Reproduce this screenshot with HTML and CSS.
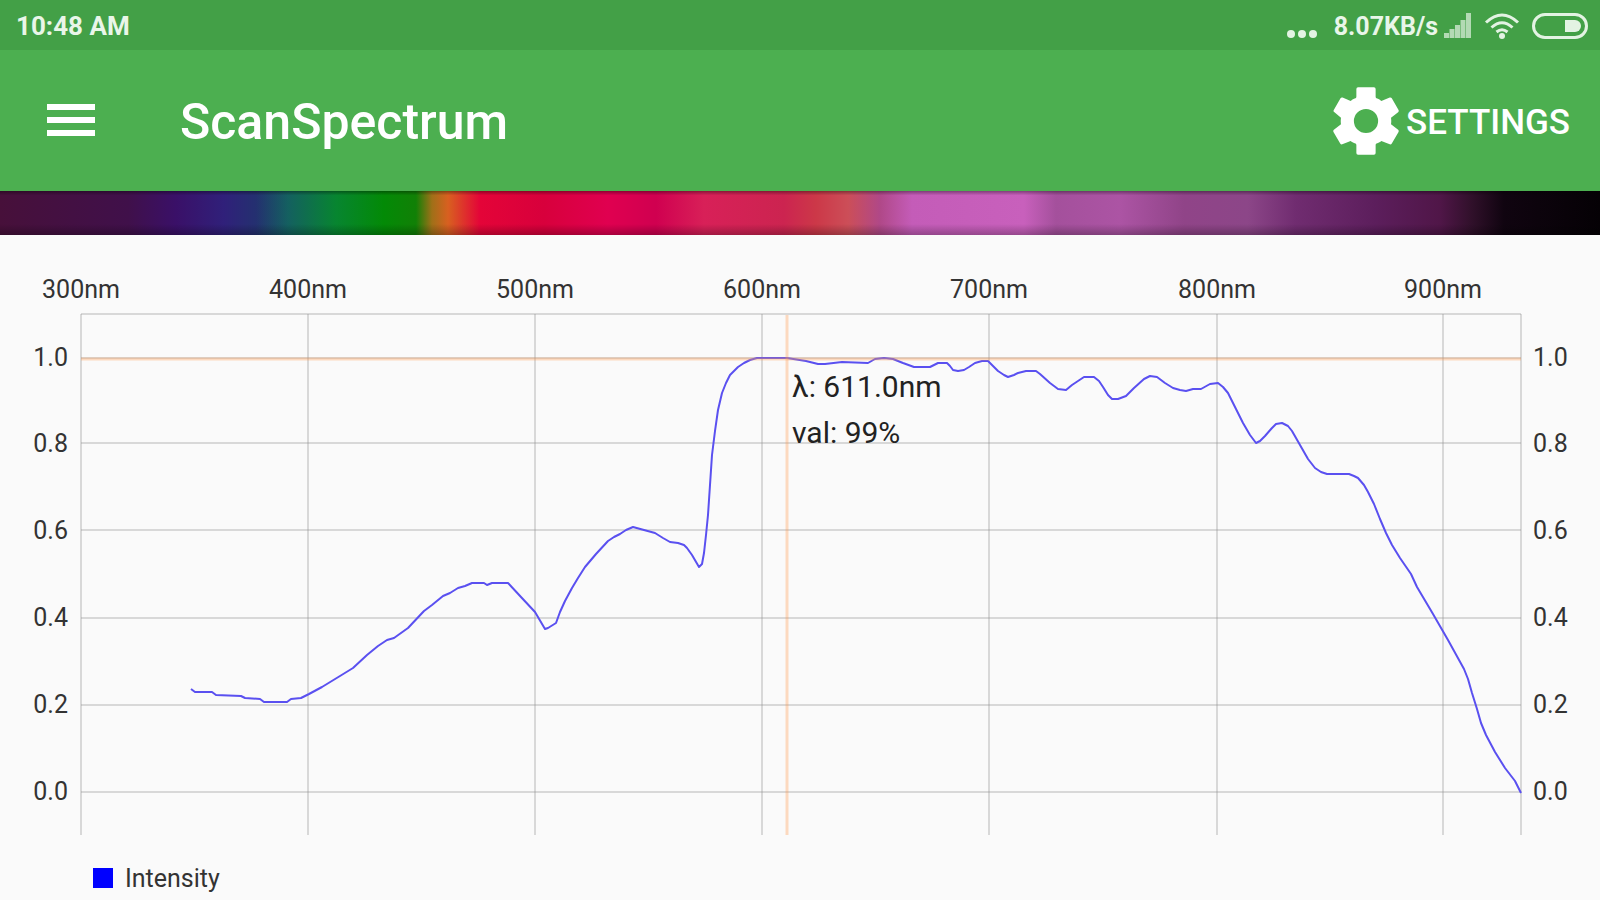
FILE: index.html
```html
<!DOCTYPE html>
<html lang="en">

<head>
    <meta charset="UTF-8">
    <meta name="viewport" content="width=device-width, initial-scale=1.0">
    <title>ScanSpectrum</title>
    <link rel="stylesheet" href="styles.css">
</head>

<body>
    <div class="status-bar">
        <span>10:48 AM</span>
        <div class="status-icons">
            <svg class="dots" width="32" height="26" viewBox="0 0 32 26">
                <circle cx="5" cy="21" r="4" />
                <circle cx="16" cy="21" r="4" />
                <circle cx="27" cy="21" r="4" />
            </svg>
            <span class="net-speed">8.07KB/s</span>
            <svg class="signal" width="28" height="26" viewBox="0 0 28 26">
                <path d="M0 25v-5h5v5zM5.5 25V16h5v9zM11 25V12h5v13zM16.500 25V7h5v18zM22 25V0h5v25z" />
            </svg>
            <svg class="wifi" width="36" height="26" viewBox="0 0 36 26">
                <path d="M2 9.500Q18 -5.500 34 9.500M7.500 14.500Q18 5 28.500 14.500M12.500 19Q18 14.500 23.500 19" />
                <circle cx="18" cy="23" r="3" />
            </svg>
            <svg class="battery" width="56" height="26" viewBox="0 0 56 26">
                <rect class="battery-shell" x="1.500" y="1.500" width="53" height="23" rx="11.500" />
                <path d="M33 7h10a6 6 0 0 1 0 12h-10z" />
            </svg>
        </div>
    </div>

    <header class="app-bar">
        <button class="menu-btn" aria-label="Menu">
            <svg width="48" height="34" viewBox="0 0 48 34">
                <path d="M0 0h48v6H0zM0 13h48v6H0zM0 26h48v6H0z" />
            </svg>
        </button>
        <h1 class="bar-text">ScanSpectrum</h1>
        <button class="settings-btn">
            <svg width="66" height="68" viewBox="2.2 2 19.6 20">
                <path d="M19.43 12.98c.04-.32.07-.64.07-.98s-.03-.66-.07-.98l2.11-1.65c.19-.15.24-.42.12-.64l-2-3.46c-.12-.22-.39-.3-.61-.22l-2.49 1c-.4-.3-.7-.5-1.2-.7-.4-.1-.5-.3-.5-.6V2.500q0-.5-.5-.5H9.640q-.5 0-.5.500v2.230c0 .3-.1.500-.5.600-.5.200-.8.400-1.200.700l-2.400-1c-.23-.09-.49 0-.61.22l-2 3.46c-.13.22-.07.49.12.64l2.020 1.650c-.04.32-.07.65-.07.98s.03.66.07.98l-2.110 1.650c-.19.15-.24.42-.12.64l2 3.460c.12.22.39.3.61.22l2.490-1c.4.3.7.5 1.200.700.400.100.500.300.500.600v2.270q0 .5.500.500h4.720q.5 0 .5-.500v-2.270c0-.3.1-.5.5-.6.5-.2.8-.4 1.200-.7l2.490 1c.23.09.49 0 .61-.22l2-3.460c.12-.22.07-.49-.12-.64zM12 15.600a3.600 3.600 0 1 1 0-7.200a3.600 3.600 0 1 1 0 7.200z" />
            </svg>
            <span class="bar-text">SETTINGS</span>
        </button>
    </header>

    <div class="spectrum-strip"></div>

    <main>
        <svg class="chart" viewBox="0 0 1600 615" role="img" aria-label="Intensity by wavelength">
            <!-- grid -->
            <path class="grid" d="M81 79H1521M81 123H1521M81 208H1521M81 295H1521M81 383H1521M81 470H1521M81 557H1521" />
            <path class="grid" d="M81 79V600M308 79V600M535 79V600M762 79V600M989 79V600M1217 79V600M1443 79V600M1521 79V600" />

            <!-- intensity curve -->
            <polyline class="curve" points="191,454 195,457 212,457 216,460 241,461 245,463 260,464 264,467 287,467 291,464 301,463 309,459 322,452 340,441 353,433 367,420 378,411 387,405 394,403 408,393 424,376 432,370 443,361 450,358 458,353 465,351 472,348 484,348 487,350 492,348 508,348 521,362 535,377 545,394 548,393 556,388 560,377 565,366 572,353 578,343 585,332 596,319 608,306 614,302 620,299 626,295 633,292 644,295 655,298 663,303 670,307 678,308 684,310 687,313 692,320 699,332 702,329 704,318 706,300 708,280 712,220 715,196 718,175 722,158 726,148 730,140 738,132 744,128 750,125 757,123 787,123 806,126 818,129 825,129 842,127 868,128 875,124 884,123 893,124 903,128 914,132 930,132 938,128 947,128 950,131 953,135 958,136 964,135 969,132 975,128 982,126 988,126 992,130 998,136 1004,140 1008,142 1014,140 1018,138 1026,136 1036,136 1040,139 1050,148 1058,154 1066,155 1072,150 1078,146 1084,142 1094,142 1099,146 1103,152 1108,160 1112,164 1118,164 1126,161 1134,153 1144,144 1150,141 1157,142 1165,148 1173,153 1180,155 1186,156 1193,154 1201,154 1210,149 1218,148 1223,152 1228,158 1236,174 1243,188 1250,200 1256,208 1260,206 1265,201 1272,193 1276,189 1282,188 1288,191 1292,196 1300,210 1308,224 1315,233 1321,237 1327,239 1349,239 1354,241 1358,243 1364,250 1368,257 1374,269 1380,284 1386,298 1392,310 1400,323 1411,339 1417,352 1433,379 1448,405 1464,434 1468,444 1472,458 1477,474 1481,488 1486,500 1495,517 1505,533 1515,546 1521,558" />

            <!-- cursor -->
            <path class="cursor-h" d="M81 124H1521" />
            <path class="cursor-v" d="M787 80V600" />
            <text class="cursor-text" x="792" y="162">λ: 611.0nm</text>
            <text class="cursor-text" x="792" y="208">val: 99%</text>

            <g class="x-labels">
                <text x="81" y="63">300nm</text>
                <text x="308" y="63">400nm</text>
                <text x="535" y="63">500nm</text>
                <text x="762" y="63">600nm</text>
                <text x="989" y="63">700nm</text>
                <text x="1217" y="63">800nm</text>
                <text x="1443" y="63">900nm</text>
            </g>
            <g class="y-labels-left">
                <text x="68" y="131">1.0</text>
                <text x="68" y="217">0.8</text>
                <text x="68" y="304">0.6</text>
                <text x="68" y="391">0.4</text>
                <text x="68" y="478">0.2</text>
                <text x="68" y="565">0.0</text>
            </g>
            <g class="y-labels-right">
                <text x="1533" y="131">1.0</text>
                <text x="1533" y="217">0.8</text>
                <text x="1533" y="304">0.6</text>
                <text x="1533" y="391">0.4</text>
                <text x="1533" y="478">0.2</text>
                <text x="1533" y="565">0.0</text>
            </g>
        </svg>
        <div class="legend">
            <span class="legend-color"></span>
            <span>Intensity</span>
        </div>
    </main>
</body>

</html>
```
FILE: styles.css
```css
* {
    box-sizing: border-box;
}

body {
    margin: 0;
    background-color: #fafafa;
    color: #222;
    font-family: Roboto, "Liberation Sans", sans-serif;
}

svg {
    display: block;
    flex-shrink: 0;
}

button {
    display: flex;
    align-items: center;
    padding: 0;
    border: none;
    background: none;
    color: white;
    font-family: inherit;
    cursor: pointer;
}

/* status bar */
.status-bar {
    display: flex;
    justify-content: space-between;
    align-items: center;
    height: 50px;
    padding: 2px 12px 0 16px;
    background-color: #43a047;
    color: #e9f6e9;
    font-size: 26px;
    font-weight: 700;
}
.status-icons {
    display: flex;
    align-items: center;
}
.status-icons svg {
    fill: #e3f3e3;
}
.net-speed {
    margin: 0 6px 0 16px;
    font-size: 25px;
}
.signal {
    opacity: 0.7;
}
.wifi {
    margin: 0 12px;
}
.wifi path, .status-icons .battery-shell {
    fill: none;
    stroke: #e3f3e3;
    stroke-width: 3;
}

/* app bar */
.app-bar {
    display: flex;
    align-items: center;
    height: 141px;
    padding: 0 30px 0 47px;
    background-color: #4caf50;
    color: white;
}
.app-bar svg {
    fill: white;
}
.app-bar h1 {
    margin: 0 auto 0 85px;
    font-size: 50px;
    font-weight: 500;
}
.app-bar .bar-text {
    padding-top: 3px;
}
.settings-btn {
    gap: 7px;
    font-size: 35px;
    font-weight: 500;
}

.spectrum-strip {
    height: 44px;
    background:
        linear-gradient(to bottom, rgba(0, 0, 0, 0.35), transparent 10%, transparent 75%, rgba(0, 0, 0, 0.25)),
        linear-gradient(to right,
            #47103a 0%, #40104a 8%, #3a1068 11%, #30207a 14%,
            #243070 16%, #146060 18%, #078530 21%, #038a06 24%,
            #118006 26%, #a07018 27%, #d86020 28%, #e40438 30%,
            #d8003c 34%, #e00050 38%, #d00050 41%, #d82058 44%,
            #cc2450 49%, #cc3848 51%, #cc4e58 53%, #b04888 55%,
            #c45cb8 57%, #c860bc 64%, #a4509c 66%, #ac54a4 70%,
            #904488 74%, #8c4688 78%, #702c70 81%, #5c1e5c 86%,
            #501648 90%, #30102a 92%, #100410 94%, #050105 100%);
}

/* chart */
.chart {
    width: 100%;
    height: auto;
}
.chart text {
    fill: #333;
    font-size: 25px;
}
.chart .cursor-text {
    fill: #222;
    font-size: 30px;
}
.grid {
    stroke: #999;
    stroke-opacity: 0.35;
    stroke-width: 2;
}
.curve {
    fill: none;
    stroke: #5a50f0;
    stroke-width: 2;
    stroke-linejoin: round;
}
.cursor-h, .cursor-v {
    stroke: #ff9c50;
    stroke-opacity: 0.35;
    stroke-width: 3;
}
.x-labels {
    text-anchor: middle;
}
.y-labels-left {
    text-anchor: end;
}

.legend {
    display: flex;
    align-items: center;
    gap: 12px;
    height: 50px;
    padding: 6px 0 0 93px;
    color: #333;
    font-size: 25px;
}
.legend-color {
    width: 20px;
    height: 20px;
    background-color: blue;
}
```
